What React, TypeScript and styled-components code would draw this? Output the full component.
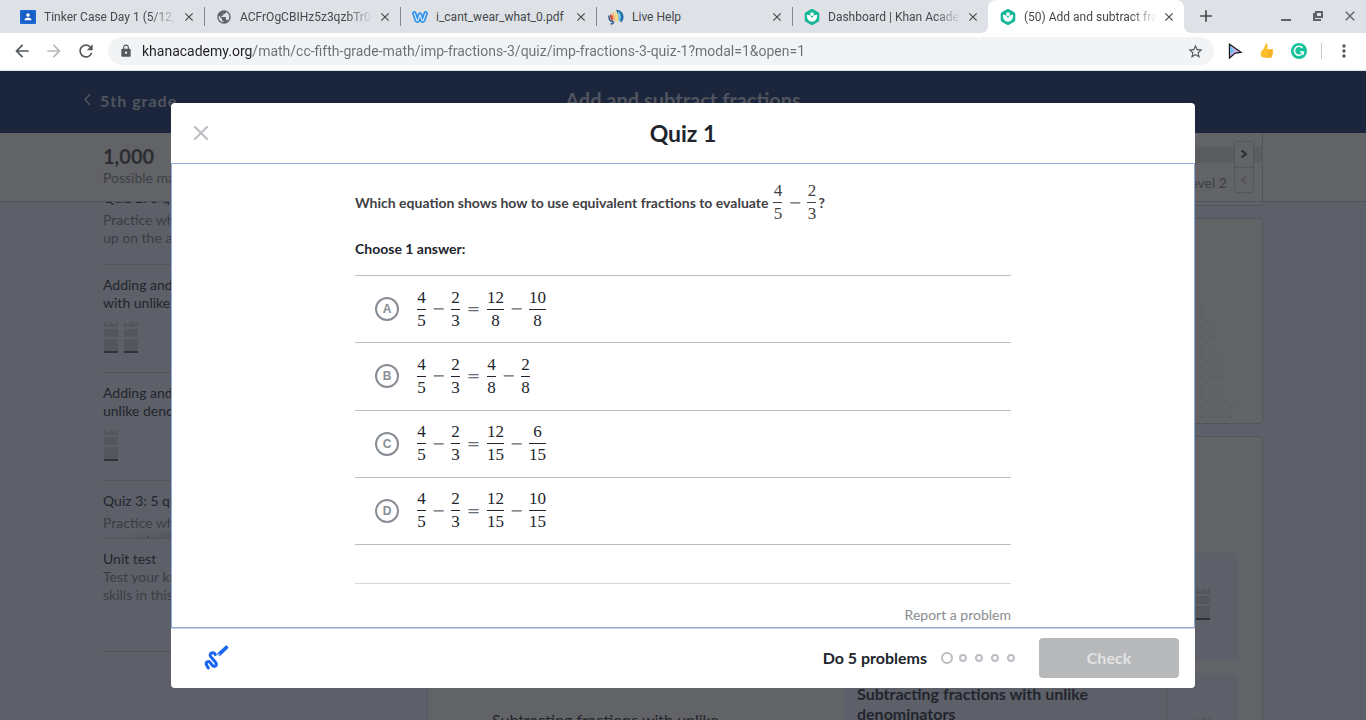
import React from "react";
import styled, { createGlobalStyle, css } from "styled-components";
import {
  MdAdd,
  MdArrowBack,
  MdArrowForward,
  MdClose,
  MdLock,
  MdMoreVert,
  MdPublic,
  MdRefresh,
  MdStarBorder,
} from "react-icons/md";

const GlobalStyle = createGlobalStyle`
  *, *::before, *::after { box-sizing: border-box; }
  body {
    margin: 0;
    overflow: hidden;
    font-family: Lato, "Noto Sans", sans-serif;
    font-size: 14px;
    color: #21242c;
  }
  button, input { font: inherit; }
  p, h1, h2, h3, ul { margin: 0; padding: 0; }
`;

const dim = {
  navy: "#1b263c",
  card: "#626366",
  page: "#5d6068",
  line: "#53555b",
  dark: "#22252d",
  muted: "#3b3e45",
  soft: "#54565c",
};

const Screen = styled.div`
  display: flex;
  flex-direction: column;
  height: 100vh;
`;

const IconButton = styled.button<{ $size?: number }>`
  display: flex;
  align-items: center;
  justify-content: center;
  flex: none;
  width: ${(p) => p.$size ?? 32}px;
  height: ${(p) => p.$size ?? 32}px;
  padding: 0;
  border: 0;
  background: none;
  color: inherit;
`;

/* ---------- browser frame ---------- */

const TabStrip = styled.div`
  display: flex;
  flex: none;
  height: 33px;
  padding-left: 8px;
  background: #dee1e6;
  color: #45494d;
  font: 12px Roboto, sans-serif;
`;

const Tab = styled.div<{ $active?: boolean; $divider?: boolean }>`
  position: relative;
  display: flex;
  align-items: center;
  width: 196px;
  padding: 0 7px 0 12px;
  ${(p) =>
    p.$active &&
    css`
      background: #fff;
      border-radius: 8px 8px 0 0;
      &::before,
      &::after {
        content: "";
        position: absolute;
        bottom: 0;
        width: 8px;
        height: 8px;
      }
      &::before {
        left: -8px;
        background: radial-gradient(circle at 0 0, transparent 8px, #fff 8px);
      }
      &::after {
        right: -8px;
        background: radial-gradient(circle at 100% 0, transparent 8px, #fff 8px);
      }
    `}
  ${(p) =>
    p.$divider &&
    css`
      &::after {
        content: "";
        position: absolute;
        right: -1px;
        top: 7px;
        width: 1px;
        height: 19px;
        background: #84878b;
      }
    `}
`;

const TabTitle = styled.span<{ $fade?: boolean }>`
  flex: 1;
  min-width: 0;
  margin: 0 4px 0 8px;
  overflow: hidden;
  white-space: nowrap;
  ${(p) => p.$fade && "mask-image: linear-gradient(90deg, #000 80%, transparent 100%);"}
`;

const NewTab = styled(IconButton)`
  margin: 0 auto 0 6px;
`;

const WindowControls = styled.div`
  display: flex;
  color: #5f6368;
`;

const Toolbar = styled.div`
  display: flex;
  align-items: center;
  flex: none;
  height: 38px;
  padding: 0 6px 1px;
  background: #fff;
  border-bottom: 1px solid #dfe3e4;
  color: #54585c;
`;

const Omnibox = styled.label`
  display: flex;
  align-items: center;
  flex: 1;
  height: 28px;
  margin: 0 5px 0 6px;
  padding: 0 3px 0 11px;
  border-radius: 14px;
  background: #f1f3f4;
`;

const UrlInput = styled.input`
  flex: 1;
  min-width: 0;
  margin-left: 9px;
  padding: 0;
  border: 0;
  outline: 0;
  font: 14px Roboto, sans-serif;
  color: transparent;
  background: linear-gradient(90deg, #202124 111px, #6b6f73 111px);
  background-clip: text;
`;

const ToolbarRule = styled.span`
  width: 1px;
  height: 16px;
  margin: 0 6px;
  background: #c6c8ca;
`;

/* ---------- dimmed course page ---------- */

const Viewport = styled.div`
  position: relative;
  flex: 1;
  min-height: 0;
  overflow: hidden;
  background: ${dim.page};
`;

const Course = styled.div`
  display: flex;
  flex-direction: column;
  height: 100%;
`;

const CourseHeader = styled.header`
  display: grid;
  grid-template-columns: 1fr auto 1fr;
  flex: none;
  height: 62px;
  padding: 0 83px;
  background: ${dim.navy};
  color: #50545e;
`;

const BackLink = styled.a`
  display: flex;
  align-items: center;
  gap: 8px;
  height: 58px;
  color: inherit;
  font-size: 16px;
  font-weight: 700;
  letter-spacing: 1px;
  text-decoration: none;
`;

const CourseTitle = styled.h1`
  font-size: 20px;
  line-height: 58px;
`;

const Container = styled.div`
  display: flex;
  width: 100%;
  max-width: 1160px;
  margin: 0 auto;
`;

const ScoreBar = styled.div`
  flex: none;
  height: 69px;
  background: ${dim.card};
  border-bottom: 1px solid ${dim.line};
`;

const Score = styled.div`
  flex: 1;
  padding-top: 11px;
  color: ${dim.muted};
  line-height: 18px;
  strong {
    display: block;
    color: #2b2d33;
    font-size: 20px;
    line-height: 25px;
  }
`;

const LevelPanel = styled.div`
  display: flex;
  justify-content: flex-end;
  width: 836px;
  height: 68px;
  padding: 8px 8px 0 0;
  border-right: 1px solid ${dim.line};
  color: ${dim.muted};
  background: linear-gradient(#5b5c60, #5b5c60) 0 14px / 100% 16px no-repeat;
`;

const LevelName = styled.span`
  padding: 33px 7px 0 0;
  line-height: 18px;
`;

const Stepper = styled.div`
  display: flex;
  flex-direction: column;
  width: 20px;
  height: 52px;
  border: 1px solid ${dim.line};
  border-radius: 3px;
  background: ${dim.card};
`;

const StepButton = styled.button`
  flex: 1;
  display: flex;
  align-items: center;
  justify-content: center;
  padding: 0;
  border: 0;
  background: none;
  color: #2b2d33;
  & + & {
    border-top: 1px solid ${dim.line};
    color: ${dim.line};
  }
`;

const CourseBody = styled.div`
  flex: 1;
  min-height: 0;
  overflow: hidden;
`;

const Sidebar = styled.aside`
  flex: 1;
  padding-right: 24px;
  line-height: 18px;
  color: ${dim.muted};
`;

const LessonList = styled.div`
  height: 336px;
  overflow: hidden;
  background: radial-gradient(ellipse at 50% 100%, #4b4e55, transparent 70%) 0 100% / 100% 10px
    no-repeat;
`;

const Lesson = styled.section`
  padding: 11px 0 18px;
  border-top: 1px solid ${dim.line};
  &:first-child {
    margin-top: -25px;
    padding-bottom: 17px;
  }
`;

const LessonTitle = styled.h3<{ $gap?: boolean }>`
  margin-bottom: ${(p) => (p.$gap ? 4 : 0)}px;
  color: ${dim.dark};
  font-size: 14px;
  font-weight: 400;
`;

const MasteryRow = styled.div`
  display: flex;
  gap: 6px;
  padding: 9px 0 1px 1px;
  svg {
    display: block;
  }
`;

const UnitTest = styled.section`
  height: 114px;
  padding-top: 11px;
  border: solid ${dim.line};
  border-width: 1px 0;
`;

const Main = styled.main`
  width: 836px;
`;

const Card = styled.section<{ $height?: number; $cap?: boolean }>`
  display: flex;
  justify-content: flex-end;
  align-items: flex-end;
  height: ${(p) => p.$height ?? 320}px;
  margin-bottom: 12px;
  padding-right: 24px;
  border: 1px solid ${dim.line};
  border-radius: ${(p) => (p.$cap ? "0 0 3px 3px" : "3px")};
  ${(p) => p.$cap && "border-top: 0;"}
  background: ${dim.card};
`;

const SkillCard = styled(Card)`
  display: grid;
  grid-template-columns: 1fr 393px;
  align-items: start;
  padding-top: 116px;
`;

const SkillLink = styled.a`
  padding: 157px 64px 0;
  color: ${dim.dark};
  font-size: 16px;
  line-height: 20px;
  text-decoration: none;
`;

const SkillColumn = styled.div`
  display: grid;
  gap: 14px;
`;

const SkillTile = styled.div`
  display: grid;
  grid-template-columns: 1fr 72px;
  height: 107px;
  border-radius: 3px;
  background: ${dim.page};
  color: ${dim.dark};
  h3 {
    padding: 10px 64px 0 12px;
    font-size: 16px;
    line-height: 20px;
  }
`;

const SkillMastery = styled.div<{ $divided?: boolean }>`
  padding: ${(p) => (p.$divided ? 43 : 35)}px 0 0 29px;
  border-left: 1px solid ${(p) => (p.$divided ? dim.line : "transparent")};
`;

/* ---------- quiz dialog ---------- */

const Overlay = styled.div`
  position: absolute;
  inset: 0;
  padding: 32px;
`;

const Dialog = styled.div`
  display: flex;
  flex-direction: column;
  width: 100%;
  max-width: 1024px;
  height: 100%;
  margin: 0 auto;
  overflow: hidden;
  border-radius: 4px;
  background: #fff;
`;

const DialogHeader = styled.div`
  display: grid;
  grid-template-columns: 1fr auto 1fr;
  align-items: center;
  flex: none;
  height: 60px;
  padding: 0 14px;
  color: #babec2;
`;

const DialogTitle = styled.h2`
  color: #21242c;
  font-size: 23px;
  line-height: 28px;
`;

const DialogContent = styled.div`
  flex: 1;
  min-height: 0;
  overflow: hidden;
  padding: 16px 24px 0;
  border: 1px solid #8fabdc;
`;

const Exercise = styled.form`
  max-width: 656px;
  margin: 0 auto;
`;

const Question = styled.p`
  display: flex;
  align-items: center;
  color: #3f4145;
  font-weight: 700;
  line-height: 18px;
`;

const Instruction = styled.p`
  margin: 14px 0 16px;
  font-weight: 700;
  line-height: 20px;
`;

const ChoiceList = styled.ul`
  display: grid;
  grid-template-rows: repeat(4, 1fr);
  height: 270px;
  border-bottom: 1px solid #babec2;
  list-style: none;
`;

const Choice = styled.li`
  border-top: 1px solid #babec2;
`;

const ChoiceLabel = styled.label`
  display: flex;
  align-items: center;
  gap: 16px;
  height: 100%;
  padding-left: 20px;
`;

const Bubble = styled.span`
  display: grid;
  place-items: center;
  color: #888d93;
  font: 700 12px "Liberation Sans", sans-serif;
  > * {
    grid-area: 1 / 1;
  }
`;

const Radio = styled.input`
  appearance: none;
  width: 24px;
  height: 24px;
  margin: 0;
  border: 2px solid #888d93;
  border-radius: 50%;
`;

const MathRow = styled.span`
  display: inline-flex;
  align-items: center;
  font: 17px "Liberation Serif", serif;
`;

const FractionBox = styled.span`
  display: flex;
  flex-direction: column;
  min-width: 9px;
  margin: 0 2px;
  text-align: center;
  line-height: 22px;
  span + span {
    border-top: 1px solid currentColor;
  }
`;

const Operator = styled.span<{ $relation?: boolean }>`
  display: flex;
  justify-content: center;
  width: 13px;
  margin: 0 ${(p) => (p.$relation ? 5 : 4)}px;
  color: #6a6d73;
  font: 16px "DejaVu Serif", serif;
  line-height: 22px;
`;

const QuestionMath = styled.span`
  margin-left: 3px;
`;

const Report = styled.div`
  margin-top: 38px;
  padding-top: 21px;
  border-top: 1px solid #d6d8da;
  text-align: right;
  line-height: 20px;
  a {
    color: #888d93;
    text-decoration: none;
  }
`;

const DialogFooter = styled.div`
  display: flex;
  align-items: center;
  flex: none;
  height: 60px;
  padding: 0 16px 1px 29px;
  border-top: 1px solid #d0d2d4;
  font-size: 16px;
  font-weight: 700;
`;

const Progress = styled.div`
  display: flex;
  align-items: center;
  gap: 8px;
  margin: 0 24px 0 14px;
`;

const Dot = styled.span<{ $current?: boolean }>`
  width: ${(p) => (p.$current ? 12 : 8)}px;
  height: ${(p) => (p.$current ? 12 : 8)}px;
  margin-right: ${(p) => (p.$current ? -2 : 0)}px;
  border: 2px solid #babec2;
  border-radius: 50%;
`;

const Goal = styled.span`
  margin-left: auto;
  line-height: 20px;
`;

const CheckButton = styled.button`
  width: 140px;
  height: 40px;
  padding: 0 0 2px;
  border: 0;
  border-radius: 4px;
  background: #b8b9bb;
  color: #e1e2e3;
  font-weight: 700;
`;

/* ---------- drawings ---------- */

const ClassroomIcon = () => (
  <svg width="16" height="16" viewBox="0 0 16 16">
    <rect y="1" width="16" height="14" rx="1" fill="#1967d2" />
    <rect x="2" y="3" width="12" height="10" fill="#1a5bc0" />
    <circle cx="8" cy="6" r="1.8" fill="#fff" />
    <path d="M4.400 11.200c0-1.800 2-2.600 3.600-2.600s3.600.8 3.600 2.600z" fill="#fff" />
  </svg>
);

const WeeblyIcon = () => (
  <svg width="16" height="16" viewBox="0 0 16 16" fill="none" strokeLinecap="round" strokeLinejoin="round">
    <path d="M2.300 4.300 4.700 11.300Q5.400 12.300 6.100 11.300L8 5.500 9.900 11.300Q10.600 12.300 11.300 11.300L13.700 4.300" stroke="#2990ea" strokeWidth="4.400" />
    <path d="M2.300 4.300 4.700 11.300Q5.400 12.300 6.100 11.300L8 5.500 9.900 11.300Q10.600 12.300 11.300 11.300L13.700 4.300" stroke="#dee8f4" strokeWidth="1.200" />
  </svg>
);

const LiveHelpIcon = () => (
  <svg width="16" height="16" viewBox="0 0 16 16" fill="none">
    <path d="M8 .8C12.500.8 15.500 4 15.500 8c0 2.500-1 4.300-2.500 5.500z" fill="#1d6aa8" />
    <path d="M10 2.500c2 1 3.200 3 3 6l-1.500 4.500L9.500 10z" fill="#7cc6ea" />
    <path d="M7.200 1.500C9.700 3.500 10.600 9 9.800 13.500 7.500 12 6.500 5.500 7.200 1.500z" fill="#f8dc7c" />
    <path d="M4.500 2.500C6.500 5 7.800 9.500 7 12.500 4.500 10.500 3.500 6 4.500 2.500z" fill="#f3b268" />
    <path d="M2 5c-.5 3 .5 5.500 3 7.500L4.600 7z" fill="#d0453a" />
    <path d="M.9 6.500C.6 10 2 12.300 5.600 13.200 5.500 14.800 4 15.300 2.500 14.600" stroke="#234f86" strokeWidth="1.300" />
  </svg>
);

const KhanIcon = () => (
  <svg width="16" height="16" viewBox="0 0 16 16">
    <path d="M8 0c.4 0 .8.1 1.100.3l5.200 3c.6.400 1 1 1 1.700v6c0 .7-.4 1.300-1 1.700l-5.200 3c-.7.400-1.500.400-2.200 0l-5.200-3c-.6-.4-1-1-1-1.700V5c0-.7.4-1.300 1-1.700l5.200-3C7.200.1 7.600 0 8 0z" fill="#14b796" />
    <circle cx="8" cy="5.200" r="1.900" fill="#fff" />
    <path d="M2.900 5.800C5.700 5.900 7.500 7.400 8 9.200 8.500 7.400 10.300 5.900 13.100 5.800 13.300 9.900 11.300 12.700 8 12.700S2.700 9.900 2.900 5.800z" fill="#fff" />
  </svg>
);

const RestoreIcon = () => (
  <svg width="12" height="12" viewBox="0 0 12 12" fill="none" stroke="currentColor" strokeWidth="2">
    <path d="M4 2h6v5H4zM2 3v7h7" />
  </svg>
);

const MinimizeIcon = () => (
  <svg width="12" height="12" viewBox="0 0 12 12">
    <path d="M1 9h10v2H1z" fill="currentColor" />
  </svg>
);

const PointerIcon = () => (
  <svg width="16" height="16" viewBox="0 0 16 16">
    <path d="M2.500 1.200 14 9.300 8.200 10 2.500 15z" fill="#d4b4f2" stroke="#15161c" strokeWidth="1.300" />
    <path d="M3.300 3v8l4-3z" fill="#62c4ee" />
  </svg>
);

const ThumbIcon = () => (
  <svg width="16" height="16" viewBox="0 0 16 16">
    <path d="M6.600.6c1.500-.3 2.100.8 2 2.200L8.300 6h4.500c1.500 0 1.900 1.700.8 2.300.9.600.8 1.900-.1 2.300.7.700.4 1.800-.5 2.200.3 1.100-.4 2-1.600 2.100-3 .3-5.500.3-8.300-.8-1.700-.7-1.900-5-.4-6.300C4.400 6.500 6 4 6.600.6z" fill="#fbbf2d" />
    <path d="M9 8.400h4M9 10.700h4M9 12.900h3.500" stroke="#e8912a" strokeWidth=".7" />
  </svg>
);

const GrammarlyIcon = () => (
  <svg width="16" height="16" viewBox="0 0 16 16" fill="none">
    <circle cx="8" cy="8" r="8" fill="#15c39a" />
    <path d="M11.500 5A4.500 4.500 0 1 0 12.300 9H9M12.300 8.500v3" stroke="#fff" strokeWidth="1.500" />
  </svg>
);

const ScratchpadIcon = () => (
  <svg width="26" height="26" viewBox="0 0 26 26" fill="none" stroke="#1865f2" strokeLinecap="round">
    <path d="M12.300 9.500C10.800 6.800 6.500 7.600 7.200 10.700C7.700 12.700 12.300 16 13.200 18.600C13.800 20.800 11.300 22.300 9.600 20.700L7 17.400C5.200 15.500 2.700 17 3.300 19.500C3.600 20.600 4.500 21.500 5.300 22.900" strokeWidth="3" />
    <path d="M16.300 9.200 23.300 2.500" strokeWidth="3.800" />
    <circle cx="15.800" cy="9.800" r=".9" fill="#fff" stroke="none" />
  </svg>
);

const MasteryIcon = () => (
  <svg width="14" height="32" viewBox="0 0 14 32" fill={dim.soft}>
    <path d="M0 0 4 4 7 0 10 4 14 0V6H0zM0 8h14v8H0zM0 18h14v12H0z" />
    <path d="M0 30h14v2H0z" fill="#2e323b" />
  </svg>
);

const dotColumns = [0, 2, 5, 10];

const DotPattern = () => (
  <svg width="44" height="122" viewBox="0 0 44 122" fill="#5c5d61">
    {dotColumns.map((start, col) =>
      Array.from({ length: 12 - start }, (_, i) => (
        <circle key={`${col}-${i}`} cx={7 + col * 10} cy={6 + (start + i) * 10} r="1.500" />
      )),
    )}
  </svg>
);

/* ---------- content ---------- */

const tabs = [
  { title: "Tinker Case Day 1 (5/12, 5/13)", icon: <ClassroomIcon />, fade: true },
  { title: "ACFrOgCBIHz5z3qzbTr0", icon: <MdPublic size={16} color="#5f6368" />, fade: true },
  { title: "i_cant_wear_what_0.pdf", icon: <WeeblyIcon /> },
  { title: "Live Help", icon: <LiveHelpIcon /> },
  { title: "Dashboard | Khan Academy", icon: <KhanIcon />, fade: true },
  { title: "(50) Add and subtract fractions", icon: <KhanIcon />, fade: true, active: true },
];

type Frac = [number, number];

const choices: { letter: string; left: Frac; right: Frac }[] = [
  { letter: "A", left: [12, 8], right: [10, 8] },
  { letter: "B", left: [4, 8], right: [2, 8] },
  { letter: "C", left: [12, 15], right: [6, 15] },
  { letter: "D", left: [12, 15], right: [10, 15] },
];

const Fraction = ({ value }: { value: Frac }) => (
  <FractionBox>
    <span>{value[0]}</span>
    <span>{value[1]}</span>
  </FractionBox>
);

const Difference = ({ a, b }: { a: Frac; b: Frac }) => (
  <MathRow>
    <Fraction value={a} />
    <Operator>−</Operator>
    <Fraction value={b} />
  </MathRow>
);

const Browser = () => (
  <>
    <TabStrip>
      {tabs.map((tab, i) => (
        <Tab key={tab.title} $active={tab.active} $divider={i < 4}>
          {tab.icon}
          <TabTitle $fade={tab.fade}>{tab.title}</TabTitle>
          <IconButton $size={16} aria-label="Close tab">
            <MdClose size={14} />
          </IconButton>
        </Tab>
      ))}
      <NewTab aria-label="New tab">
        <MdAdd size={20} />
      </NewTab>
      <WindowControls>
        <IconButton aria-label="Minimize"><MinimizeIcon /></IconButton>
        <IconButton aria-label="Restore"><RestoreIcon /></IconButton>
        <IconButton aria-label="Close window"><MdClose size={16} /></IconButton>
      </WindowControls>
    </TabStrip>
    <Toolbar>
      <IconButton aria-label="Back"><MdArrowBack size={20} /></IconButton>
      <IconButton aria-label="Forward" disabled><MdArrowForward size={20} color="#b7b9bb" /></IconButton>
      <IconButton aria-label="Reload"><MdRefresh size={20} /></IconButton>
      <Omnibox>
        <MdLock size={14} />
        <UrlInput
          aria-label="Address"
          defaultValue="khanacademy.org/math/cc-fifth-grade-math/imp-fractions-3/quiz/imp-fractions-3-quiz-1?modal=1&open=1"
        />
        <IconButton aria-label="Bookmark"><MdStarBorder size={17} /></IconButton>
      </Omnibox>
      <IconButton aria-label="Pointer extension"><PointerIcon /></IconButton>
      <IconButton aria-label="Thumbs up extension"><ThumbIcon /></IconButton>
      <IconButton aria-label="Grammarly"><GrammarlyIcon /></IconButton>
      <ToolbarRule />
      <IconButton aria-label="Menu"><MdMoreVert size={20} /></IconButton>
    </Toolbar>
  </>
);

const CoursePage = () => (
  <Course>
    <CourseHeader>
      <BackLink href="#course">
        <svg width="9" height="14" viewBox="0 0 9 14" fill="none" stroke="currentColor" strokeWidth="1.500">
          <path d="M7 1 2 6.500 7 12" />
        </svg>
        5th grade
      </BackLink>
      <CourseTitle>Add and subtract fractions</CourseTitle>
    </CourseHeader>
    <ScoreBar>
      <Container>
        <Score>
          <strong>1,000</strong>
          Possible mastery points
        </Score>
        <LevelPanel>
          <LevelName>Level 2</LevelName>
          <Stepper>
            <StepButton aria-label="Next level">
              <svg width="8" height="10" viewBox="0 0 8 10" fill="none" stroke="currentColor" strokeWidth="2"><path d="M1.500 1.500 6 5 1.500 8.500" /></svg>
            </StepButton>
            <StepButton aria-label="Previous level">
              <svg width="8" height="10" viewBox="0 0 8 10" fill="none" stroke="currentColor" strokeWidth="2"><path d="M6.500 1.500 2 5 6.500 8.500" /></svg>
            </StepButton>
          </Stepper>
        </LevelPanel>
      </Container>
    </ScoreBar>
    <CourseBody>
      <Container>
        <Sidebar>
          <LessonList>
            <Lesson>
              <LessonTitle $gap>Quiz 2: 5 questions</LessonTitle>
              <p>Practice what you’ve learned, and level<br />up on the above skills</p>
            </Lesson>
            <Lesson>
              <LessonTitle>Adding and subtracting fractions<br />with unlike denominators</LessonTitle>
              <MasteryRow><MasteryIcon /><MasteryIcon /></MasteryRow>
            </Lesson>
            <Lesson>
              <LessonTitle>Adding and subtracting mixed<br />unlike denominators</LessonTitle>
              <MasteryRow><MasteryIcon /></MasteryRow>
            </Lesson>
            <Lesson>
              <LessonTitle $gap>Quiz 3: 5 questions</LessonTitle>
              <p>Practice what you’ve learned, and level<br />up on the above skills</p>
            </Lesson>
          </LessonList>
          <UnitTest>
            <LessonTitle>Unit test</LessonTitle>
            <p>Test your knowledge of all<br />skills in this unit</p>
          </UnitTest>
        </Sidebar>
        <Main>
          <Card $height={4} $cap />
          <Card $height={206}><DotPattern /></Card>
          <SkillCard>
            <SkillLink href="#skill">Subtracting fractions with unlike denominators</SkillLink>
            <SkillColumn>
              <SkillTile>
                <span />
                <SkillMastery><MasteryIcon /></SkillMastery>
              </SkillTile>
              <SkillTile>
                <h3>Subtracting fractions with unlike denominators</h3>
                <SkillMastery $divided><MasteryIcon /></SkillMastery>
              </SkillTile>
            </SkillColumn>
          </SkillCard>
        </Main>
      </Container>
    </CourseBody>
  </Course>
);

export default function App() {
  return (
    <Screen>
      <GlobalStyle />
      <Browser />
      <Viewport>
        <CoursePage />
        <Overlay>
          <Dialog role="dialog" aria-labelledby="quiz-title">
            <DialogHeader>
              <IconButton aria-label="Close quiz">
                <svg width="14" height="14" viewBox="0 0 14 14" stroke="currentColor" strokeWidth="2" strokeLinecap="round">
                  <path d="M1 1 13 13M13 1 1 13" />
                </svg>
              </IconButton>
              <DialogTitle id="quiz-title">Quiz 1</DialogTitle>
            </DialogHeader>
            <DialogContent>
              <Exercise>
                <Question>
                  Which equation shows how to use equivalent fractions to evaluate
                  <QuestionMath><Difference a={[4, 5]} b={[2, 3]} /></QuestionMath>?
                </Question>
                <Instruction>Choose 1 answer:</Instruction>
                <ChoiceList>
                  {choices.map((c) => (
                    <Choice key={c.letter}>
                      <ChoiceLabel>
                        <Bubble>
                          <Radio type="radio" name="answer" value={c.letter} />
                          <span>{c.letter}</span>
                        </Bubble>
                        <MathRow>
                          <Difference a={[4, 5]} b={[2, 3]} />
                          <Operator $relation>=</Operator>
                          <Difference a={c.left} b={c.right} />
                        </MathRow>
                      </ChoiceLabel>
                    </Choice>
                  ))}
                </ChoiceList>
                <Report><a href="#report">Report a problem</a></Report>
              </Exercise>
            </DialogContent>
            <DialogFooter>
              <IconButton aria-label="Scratchpad"><ScratchpadIcon /></IconButton>
              <Goal>Do 5 problems</Goal>
              <Progress>
                <Dot $current /><Dot /><Dot /><Dot /><Dot />
              </Progress>
              <CheckButton type="button" disabled>Check</CheckButton>
            </DialogFooter>
          </Dialog>
        </Overlay>
      </Viewport>
    </Screen>
  );
}
